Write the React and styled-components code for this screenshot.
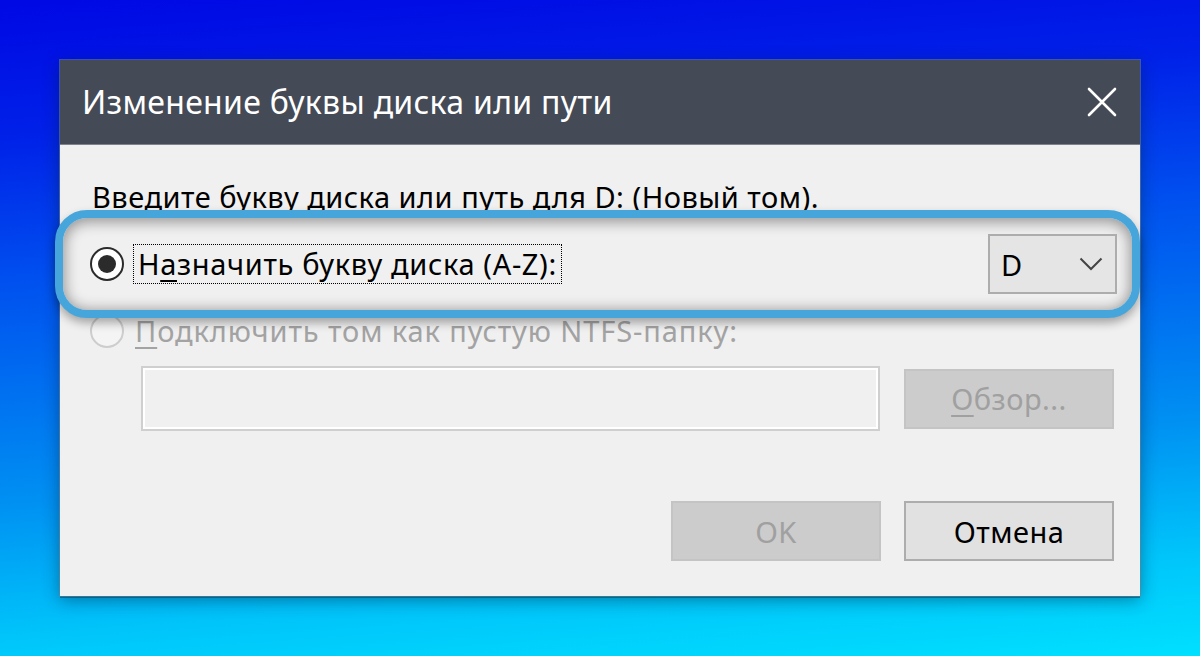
import React from 'react';
import styled, { createGlobalStyle } from 'styled-components';

const Global = createGlobalStyle`
  html, body { margin: 0; padding: 0; }
  body {
    width: 1200px;
    height: 656px;
    overflow: hidden;
    font-family: "Noto Sans", "DejaVu Sans", sans-serif;
  }
`;

const Desktop = styled.div`
  width: 1200px;
  height: 656px;
  box-sizing: border-box;
  padding: 60px 60px 0 60px;
  background: linear-gradient(176deg, #0008e4 0%, #0020e8 18%, #0050ef 38%, #0090f2 68%, #00c4fa 86%, #00e0ff 100%);
`;

const Dialog = styled.div`
  width: 1080px;
  background: #f0f0f0;
  display: flex;
  flex-direction: column;
  box-shadow: 0 0 0 1px rgba(110, 130, 150, 0.55), 0 2px 0 rgba(0, 80, 110, 0.6), 0 4px 16px rgba(0, 30, 60, 0.45);
`;

const TitleBar = styled.div`
  height: 85px;
  box-sizing: border-box;
  background: #444a56;
  border-bottom: 1px solid #7d828c;
  display: flex;
  align-items: center;
  justify-content: space-between;
  padding: 0 23px 0 22px;
  color: #ffffff;
  font-size: 32px;
  letter-spacing: 0.3px;
`;

const Title = styled.span`
  line-height: 1;
`;

const CloseIcon = styled.svg`
  width: 30px;
  height: 30px;
  display: block;
`;

const Body = styled.div`
  display: flex;
  flex-direction: column;
  padding: 39px 26px 35px 32px;
  font-size: 29px;
  letter-spacing: 0.5px;
  color: #000;
`;

const Prompt = styled.div`
  line-height: 26px;
  white-space: nowrap;
`;

const Highlight = styled.div`
  position: relative;
  height: 108px;
  box-sizing: border-box;
  margin: 0 -26px 0 -37px;
  border: 8px solid #46a6dc;
  border-radius: 32px;
  background: #f0f0f0;
  box-shadow: inset 0 2px 14px 2px rgba(0, 0, 0, 0.38), 0 5px 10px rgba(0, 0, 0, 0.32);
  display: flex;
  align-items: center;
  justify-content: space-between;
  padding: 0 15px 0 27px;
`;

const RadioRow = styled.div`
  display: flex;
  align-items: center;
  gap: ${p => p.$gap || 9}px;
  margin-top: ${p => p.$mt || 0}px;
  margin-left: ${p => p.$ml || 0}px;
  color: ${p => (p.$disabled ? '#a3a3a3' : '#000')};
`;

const Radio = styled.span`
  width: 34px;
  height: 34px;
  box-sizing: border-box;
  border-radius: 50%;
  border: ${p => (p.$checked ? '2.5px solid #2b2b2b' : '2px solid #cdcdcd')};
  background: ${p => (p.$checked ? '#ffffff' : '#f4f4f4')};
  display: flex;
  align-items: center;
  justify-content: center;
  flex: none;
  &::after {
    content: '';
    display: ${p => (p.$checked ? 'block' : 'none')};
    width: 18px;
    height: 18px;
    border-radius: 50%;
    background: #2b2b2b;
  }
`;

const FocusLabel = styled.span`
  line-height: 38px;
  padding: 0 4px 0 4px;
  border: 1px dotted #000;
  white-space: nowrap;
  letter-spacing: 0.65px;
`;

const Label = styled.span`
  line-height: 34px;
  white-space: nowrap;
  letter-spacing: 0.9px;
`;

const Select = styled.div`
  width: 129px;
  height: 60px;
  box-sizing: border-box;
  border: 2px solid #adadad;
  background: #e5e5e5;
  display: flex;
  align-items: center;
  justify-content: space-between;
  padding: 0 12px 0 11px;
`;

const Chevron = styled.svg`
  width: 24px;
  height: 14px;
  display: block;
`;

const PathRow = styled.div`
  display: flex;
  align-items: center;
  justify-content: space-between;
  margin: 18px 0 0 49px;
`;

const PathInput = styled.div`
  width: 739px;
  height: 65px;
  box-sizing: border-box;
  border: 2px solid #cfcfcf;
  box-shadow: inset 0 0 0 2px #ffffff;
  background: #f0f0f0;
`;

const Button = styled.div`
  width: 210px;
  height: 60px;
  box-sizing: border-box;
  display: flex;
  align-items: center;
  justify-content: center;
  border: 2px solid ${p => (p.$disabled ? '#c4c4c4' : '#adadad')};
  background: ${p => (p.$disabled ? '#cccccc' : '#e1e1e1')};
  color: ${p => (p.$disabled ? '#a0a0a0' : '#000')};
`;

const Footer = styled.div`
  display: flex;
  justify-content: flex-end;
  gap: 23px;
  margin-top: 70px;
`;

const U = styled.u`
  text-decoration-thickness: 2px;
  text-underline-offset: 5px;
`;

export default function App() {
  return (
    <>
      <Global />
      <Desktop>
        <Dialog>
          <TitleBar>
            <Title>Изменение буквы диска или пути</Title>
            <CloseIcon viewBox="0 0 30 30">
              <path d="M2 2 L28 28 M28 2 L2 28" stroke="#ffffff" strokeWidth="2.6" strokeLinecap="round" fill="none" />
            </CloseIcon>
          </TitleBar>
          <Body>
            <Prompt>Введите букву диска или путь для D: (Новый том).</Prompt>
            <Highlight>
              <RadioRow>
                <Radio $checked />
                <FocusLabel>
                  Н<U>а</U>значить букву диска (A-Z):
                </FocusLabel>
              </RadioRow>
              <Select>
                <span>D</span>
                <Chevron viewBox="0 0 24 14">
                  <path d="M1.5 1.5 L12 12 L22.5 1.5" stroke="#444" strokeWidth="2" fill="none" />
                </Chevron>
              </Select>
            </Highlight>
            <RadioRow $disabled $mt={-4} $ml={-2} $gap={11}>
              <Radio />
              <Label>
                <U>П</U>одключить том как пустую NTFS-папку:
              </Label>
            </RadioRow>
            <PathRow>
              <PathInput />
              <Button $disabled>
                <span>
                  <U>О</U>бзор...
                </span>
              </Button>
            </PathRow>
            <Footer>
              <Button $disabled>OK</Button>
              <Button>Отмена</Button>
            </Footer>
          </Body>
        </Dialog>
      </Desktop>
    </>
  );
}
